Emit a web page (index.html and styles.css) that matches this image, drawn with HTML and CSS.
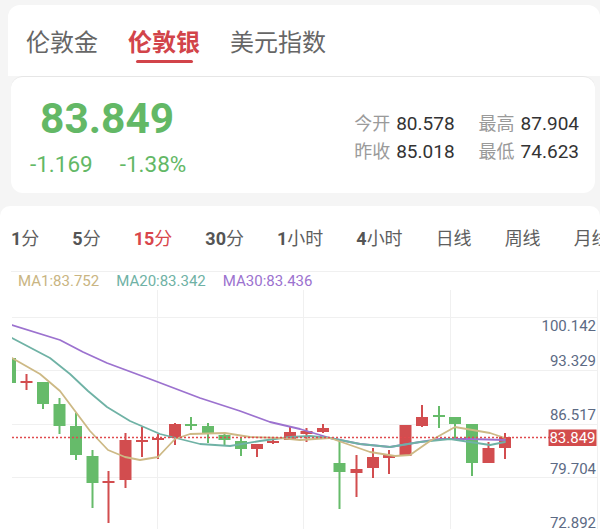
FILE: index.html
```html
<!DOCTYPE html>
<html lang="zh-CN">
<head>
<meta charset="utf-8">
<title>伦敦银</title>
<link rel="stylesheet" href="styles.css">
</head>
<body>
<div class="page">
  <div class="tabs">
    <div class="tab">伦敦金</div>
    <div class="tab active">伦敦银</div>
    <div class="tab">美元指数</div>
  </div>

  <div class="quote">
    <div class="price-col">
      <div class="price">83.849</div>
      <div class="change"><span>-1.169</span><span>-1.38%</span></div>
    </div>
    <div class="stats">
      <div class="stat"><span class="lbl">今开</span><span class="val">80.578</span></div>
      <div class="stat"><span class="lbl">最高</span><span class="val">87.904</span></div>
      <div class="stat"><span class="lbl">昨收</span><span class="val">85.018</span></div>
      <div class="stat"><span class="lbl">最低</span><span class="val">74.623</span></div>
    </div>
  </div>

  <div class="chart-panel">
    <div class="periods">
      <div class="period"><span class="n">1</span>分</div>
      <div class="period"><span class="n">5</span>分</div>
      <div class="period active"><span class="n">15</span>分</div>
      <div class="period"><span class="n">30</span>分</div>
      <div class="period"><span class="n">1</span>小时</div>
      <div class="period"><span class="n">4</span>小时</div>
      <div class="period">日线</div>
      <div class="period">周线</div>
      <div class="period">月线</div>
    </div>
    <div class="divider"></div>
    <div class="legend">
      <span class="ma1">MA1:83.752</span>
      <span class="ma20">MA20:83.342</span>
      <span class="ma30">MA30:83.436</span>
    </div>
    <svg class="kline" width="600" height="240" viewBox="0 289 600 240" xmlns="http://www.w3.org/2000/svg">
      <defs>
        <clipPath id="plot"><rect x="12" y="289" width="537" height="240"/></clipPath>
      </defs>
      <g class="grid">
        <line x1="12" y1="316.5" x2="597" y2="316.5"/>
        <line x1="12" y1="369.5" x2="597" y2="369.5"/>
        <line x1="12" y1="423.5" x2="597" y2="423.5"/>
        <line x1="12" y1="476.5" x2="597" y2="476.5"/>
        <line x1="157.5" y1="289" x2="157.5" y2="529"/>
        <line x1="303.5" y1="289" x2="303.5" y2="529"/>
        <line x1="450.5" y1="289" x2="450.5" y2="529"/>
        <line x1="597.5" y1="289" x2="597.5" y2="529"/>
      </g>
      <g clip-path="url(#plot)">
        <g class="up">
          <rect x="25.5" y="373" width="2" height="16"/><rect x="20.5" y="380" width="12" height="2"/>
          <rect x="107.5" y="470" width="2" height="52"/><rect x="102.5" y="480" width="12" height="2"/>
          <rect x="124.5" y="432" width="2" height="55"/><rect x="119.5" y="439" width="12" height="40"/>
          <rect x="141" y="426" width="2" height="30"/><rect x="136" y="439" width="12" height="2"/>
          <rect x="157" y="433" width="2" height="25"/><rect x="152" y="437" width="12" height="2"/>
          <rect x="174" y="422" width="2" height="22"/><rect x="169" y="423" width="12" height="14"/>
          <rect x="256" y="443" width="2" height="13"/><rect x="251" y="443" width="12" height="5"/>
          <rect x="272" y="437" width="2" height="6"/><rect x="267" y="440" width="12" height="2"/>
          <rect x="289" y="426" width="2" height="13"/><rect x="284" y="431" width="12" height="8"/>
          <rect x="305.5" y="427" width="2" height="14"/><rect x="300.5" y="430" width="12" height="3"/>
          <rect x="322" y="423" width="2" height="9"/><rect x="317" y="427" width="12" height="4"/>
          <rect x="355.5" y="454" width="2" height="42"/><rect x="350.5" y="468" width="12" height="4"/>
          <rect x="372" y="447" width="2" height="30"/><rect x="367" y="456" width="12" height="11"/>
          <rect x="388" y="449" width="2" height="24"/><rect x="383" y="454" width="12" height="3"/>
          <rect x="404.5" y="424" width="2" height="31"/><rect x="399.5" y="424" width="12" height="31"/>
          <rect x="421" y="404" width="2" height="22"/><rect x="416" y="416" width="12" height="9"/>
          <rect x="487.5" y="441" width="2" height="21"/><rect x="482.5" y="447" width="12" height="15"/>
          <rect x="504" y="432" width="2" height="26"/><rect x="499" y="436" width="12" height="11"/>
        </g>
        <g class="down">
          <rect x="9" y="357" width="2" height="25"/><rect x="4" y="357" width="12" height="25"/>
          <rect x="42" y="381" width="2" height="27"/><rect x="37" y="381" width="12" height="22"/>
          <rect x="58.5" y="397" width="2" height="36"/><rect x="53.5" y="403" width="12" height="22"/>
          <rect x="75" y="412" width="2" height="47"/><rect x="70" y="425" width="12" height="29"/>
          <rect x="91.5" y="449" width="2" height="58"/><rect x="86.5" y="455" width="12" height="27"/>
          <rect x="190" y="416" width="2" height="13"/><rect x="185" y="423" width="12" height="2"/>
          <rect x="207" y="422" width="2" height="20"/><rect x="202" y="425" width="12" height="8"/>
          <rect x="223.5" y="433" width="2" height="12"/><rect x="218.5" y="434" width="12" height="5"/>
          <rect x="240" y="437" width="2" height="18"/><rect x="235" y="440" width="12" height="8"/>
          <rect x="338.5" y="440" width="2" height="68"/><rect x="333.5" y="462" width="12" height="9"/>
          <rect x="438" y="405" width="2" height="22"/><rect x="433" y="414" width="12" height="2"/>
          <rect x="454" y="416" width="2" height="21"/><rect x="449" y="416" width="12" height="7"/>
          <rect x="471" y="423" width="2" height="52"/><rect x="466" y="423" width="12" height="39"/>
        </g>
        <polyline class="ma30-line" points="12,324 60,339 83,351 107,362 150,378 200,397 240,410 270,421 300,428 330,437 360,443 390,446 420,441 440,438 470,438 505,439"/>
        <polyline class="ma20-line" points="12,337 50,357 70,373 88,390 107,406 130,420 160,433 200,443 230,445 260,440 290,436 310,435 330,437 360,443 390,446 420,441 450,438 470,441 490,444 505,441"/>
        <polyline class="ma1-line" points="12,357 40,373 60,390 75,410 90,430 108,449 125,456 140,459 158,456 175,438 190,433 225,432 250,436 280,437 300,439 330,437 350,444 370,451 395,455 410,454 430,440 455,426 490,432 505,437"/>
        <line class="last" x1="12" y1="436.5" x2="549" y2="436.5"/>
      </g>
      <g class="axis">
        <text x="596" y="329.8">100.142</text>
        <text x="596" y="365.3">93.329</text>
        <text x="596" y="418.8">86.517</text>
        <text x="596" y="472.8">79.704</text>
        <text x="596" y="526.5">72.892</text>
      </g>
      <rect class="tag" x="548.5" y="428.5" width="48" height="16.5"/>
      <text class="tag-text" x="595.5" y="441.8">83.849</text>
    </svg>
  </div>
</div>
</body>
</html>
```

FILE: styles.css
```css
* { box-sizing: border-box; }

html, body {
  margin: 0;
  padding: 0;
  background: #f5f5f5;
}

body {
  font-family: Roboto, "Noto Sans CJK SC", sans-serif;
  width: 600px;
  height: 529px;
  overflow: hidden;
}

.page {
  width: 600px;
}

/* top market tabs */
.tabs {
  margin: 5px 0 0 8px;
  height: 71px;
  background: #fff;
  border-radius: 12px 12px 0 0;
  display: flex;
  align-items: flex-start;
  gap: 30px;
  padding: 24px 0 0 18px;
}

.tab {
  font-family: "Noto Sans CJK SC", sans-serif;
  font-size: 24px;
  line-height: 24px;
  color: #666;
  display: flex;
  flex-direction: column;
  align-items: center;
}

.tab.active {
  color: #d2444a;
  font-weight: 700;
}

.tab.active::after {
  content: "";
  display: block;
  width: 57px;
  height: 3px;
  margin-top: 7px;
  border-radius: 2px;
  background: #d2444a;
}

/* quote card */
.quote {
  margin: 0 5px 0 11px;
  height: 117px;
  background: #fff;
  border-top: 1px solid #e6e6e6;
  border-radius: 12px;
  display: flex;
  justify-content: space-between;
  padding: 21px 16px 0 19px;
}

.price {
  margin-left: 10px;
  font-family: Roboto, sans-serif;
  font-weight: 700;
  font-size: 42.5px;
  line-height: 42px;
  color: #63b866;
}

.change {
  margin-top: 13px;
  display: flex;
  gap: 27px;
  font-family: Roboto, sans-serif;
  font-size: 22.5px;
  line-height: 22px;
  color: #63b866;
}

.stats {
  margin-top: 11px;
  display: grid;
  grid-template-columns: auto auto;
  column-gap: 24px;
  align-content: start;
}

.stat {
  font-size: 19px;
  line-height: 26px;
  white-space: nowrap;
}

.lbl {
  font-family: "Noto Sans CJK SC", sans-serif;
  font-size: 18px;
  color: #9a9a9a;
}

.val {
  margin-left: 6px;
  font-family: Roboto, sans-serif;
  color: #333;
}

/* chart panel */
.chart-panel {
  margin-top: 13px;
  height: 323px;
  background: #fff;
  border-radius: 10px 10px 0 0;
  overflow: hidden;
}

.periods {
  display: flex;
  gap: 33px;
  padding: 20px 0 21px 11px;
  white-space: nowrap;
}

.period {
  flex: none;
  font-family: "Noto Sans CJK SC", sans-serif;
  font-size: 18px;
  line-height: 23px;
  color: #5e5e5e;
}

.period .n {
  font-family: Roboto, sans-serif;
  font-weight: 700;
  color: #555;
}

.period.active,
.period.active .n {
  color: #d9464b;
}

.divider {
  margin-left: 11px;
  height: 1px;
  background: #f0f0f0;
}

.legend {
  display: flex;
  gap: 17px;
  padding-left: 18px;
  height: 18px;
  font-family: Roboto, sans-serif;
  font-size: 15px;
  line-height: 18px;
}

.ma1 { color: #c9b582; }
.ma20 { color: #6fb2a5; }
.ma30 { color: #9c72cf; }

.kline {
  display: block;
}

.grid line {
  stroke: #f0f0f0;
  stroke-width: 1;
}

.up rect { fill: #d24d4f; }
.down rect { fill: #66bb6a; }

.ma30-line, .ma20-line, .ma1-line {
  fill: none;
  stroke-width: 1.8;
  stroke-linejoin: round;
  stroke-linecap: round;
}
.ma30-line { stroke: #9c72cf; }
.ma20-line { stroke: #6fb2a5; }
.ma1-line { stroke: #cdb985; }

.last {
  stroke: #e04a4e;
  stroke-width: 1.5;
  stroke-dasharray: 2 2;
}

.axis text {
  font-family: Roboto, sans-serif;
  font-size: 15px;
  fill: #5c6a84;
  text-anchor: end;
}

.tag { fill: #d24c4c; }

.tag-text {
  font-family: Roboto, sans-serif;
  font-size: 15px;
  fill: #fff;
  text-anchor: end;
}
```
